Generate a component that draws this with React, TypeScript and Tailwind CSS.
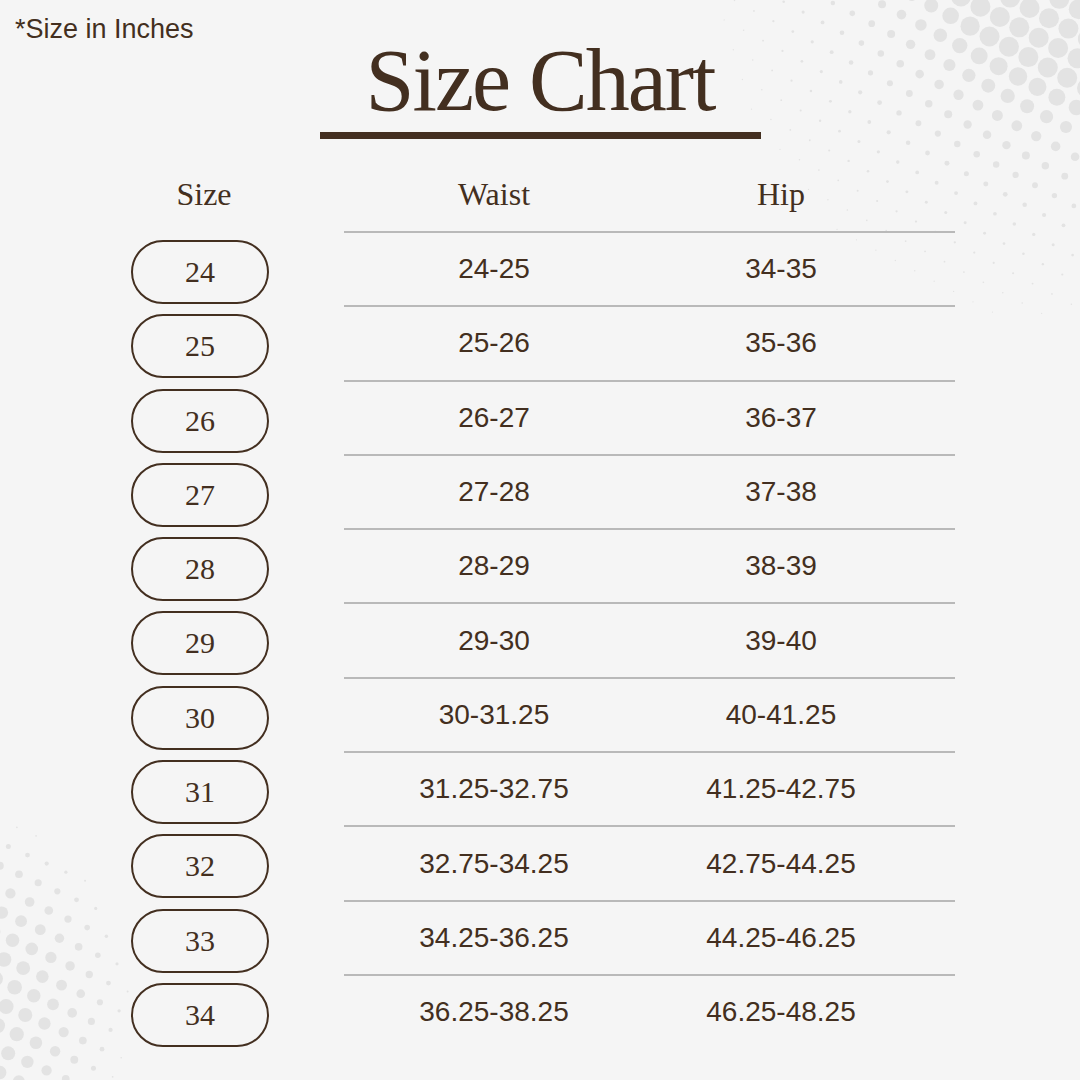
const rows = [
  { size: '24', waist: '24-25', hip: '34-35' },
  { size: '25', waist: '25-26', hip: '35-36' },
  { size: '26', waist: '26-27', hip: '36-37' },
  { size: '27', waist: '27-28', hip: '37-38' },
  { size: '28', waist: '28-29', hip: '38-39' },
  { size: '29', waist: '29-30', hip: '39-40' },
  { size: '30', waist: '30-31.25', hip: '40-41.25' },
  { size: '31', waist: '31.25-32.75', hip: '41.25-42.75' },
  { size: '32', waist: '32.75-34.25', hip: '42.75-44.25' },
  { size: '33', waist: '34.25-36.25', hip: '44.25-46.25' },
  { size: '34', waist: '36.25-38.25', hip: '46.25-48.25' },
];

type Dot = { x: number; y: number; r: number };

// halftone dots fading out from a corner point
const halftone = (
  cx: number,
  cy: number,
  angle: number,
  spacing: number,
  size: (dist: number) => number,
): Dot[] => {
  const dots: Dot[] = [];
  const a = (angle * Math.PI) / 180;
  for (let i = -30; i <= 30; i++) {
    for (let j = -30; j <= 30; j++) {
      const x = cx + i * spacing * Math.cos(a) - j * spacing * Math.sin(a);
      const y = cy + i * spacing * Math.sin(a) + j * spacing * Math.cos(a);
      if (x < -20 || x > 1100 || y < -20 || y > 1100) continue;
      const d = size(Math.hypot(x - cx, y - cy));
      if (d < 1.2) continue;
      dots.push({ x, y, r: d / 2 });
    }
  }
  return dots;
};

const topRight = halftone(1080, -40, 28, 22, (dist) =>
  Math.min(20, 20 * Math.exp(-(dist - 125) / 85)),
);
const bottomLeft = halftone(-60, 1000, 24, 21, (dist) => {
  if (dist < 65) return 15;
  const t = (dist - 65) / 135;
  return t >= 1 ? 0 : 15 * (1 - Math.pow(t, 1.5));
});

const Backdrop = () => (
  <svg className="absolute inset-0 pointer-events-none" width="1080" height="1080" viewBox="0 0 1080 1080">
    {topRight.map((d, i) => (
      <circle key={`t${i}`} cx={d.x} cy={d.y} r={d.r} fill="#e3e3e3" />
    ))}
    {bottomLeft.map((d, i) => (
      <circle key={`b${i}`} cx={d.x} cy={d.y} r={d.r} fill="#e3e3e3" />
    ))}
  </svg>
);

const serif = "font-['Liberation_Serif','Times_New_Roman',serif]";
const sans = "font-['Liberation_Sans',Arial,sans-serif]";

export default function App() {
  return (
    <div className="relative w-[1080px] h-[1080px] overflow-hidden bg-[#f5f5f5] text-[#432f20]">
      <Backdrop />

      <p className={`absolute left-[15px] top-[16px] text-[27px] leading-[27px] ${sans}`}>*Size in Inches</p>

      <div className="relative flex flex-col">
        <h1 className={`pt-[37px] text-center text-[88px] leading-[88px] tracking-[-2px] font-normal ${serif}`}>
          Size Chart
        </h1>
        <div className="mx-auto mt-[7px] h-[7px] w-[441px] bg-[#432f20]" />

        <div className="pl-[131px]">
          {/* header */}
          <div className={`flex h-[92px] pt-[39px] text-[32px] leading-[32px] ${serif}`}>
            <div className="w-[138px] pl-[8px] text-center">Size</div>
            <div className="ml-[75px] w-[300px] text-center">Waist</div>
            <div className="w-[274px] text-center">Hip</div>
          </div>

          {rows.map((row) => (
            <div key={row.size} className="flex h-[74.3px]">
              <div
                className={`mt-[9px] flex h-[64px] w-[138px] items-center justify-center rounded-full border-2 border-[#432f20] text-[30px] leading-none ${serif}`}
              >
                {row.size}
              </div>
              <div className={`ml-[75px] flex w-[611px] items-center border-t-2 border-[#b9b9b9] text-[28px] ${sans}`}>
                <div className="w-[300px] text-center">{row.waist}</div>
                <div className="w-[274px] text-center">{row.hip}</div>
              </div>
            </div>
          ))}
        </div>
      </div>
    </div>
  );
}
